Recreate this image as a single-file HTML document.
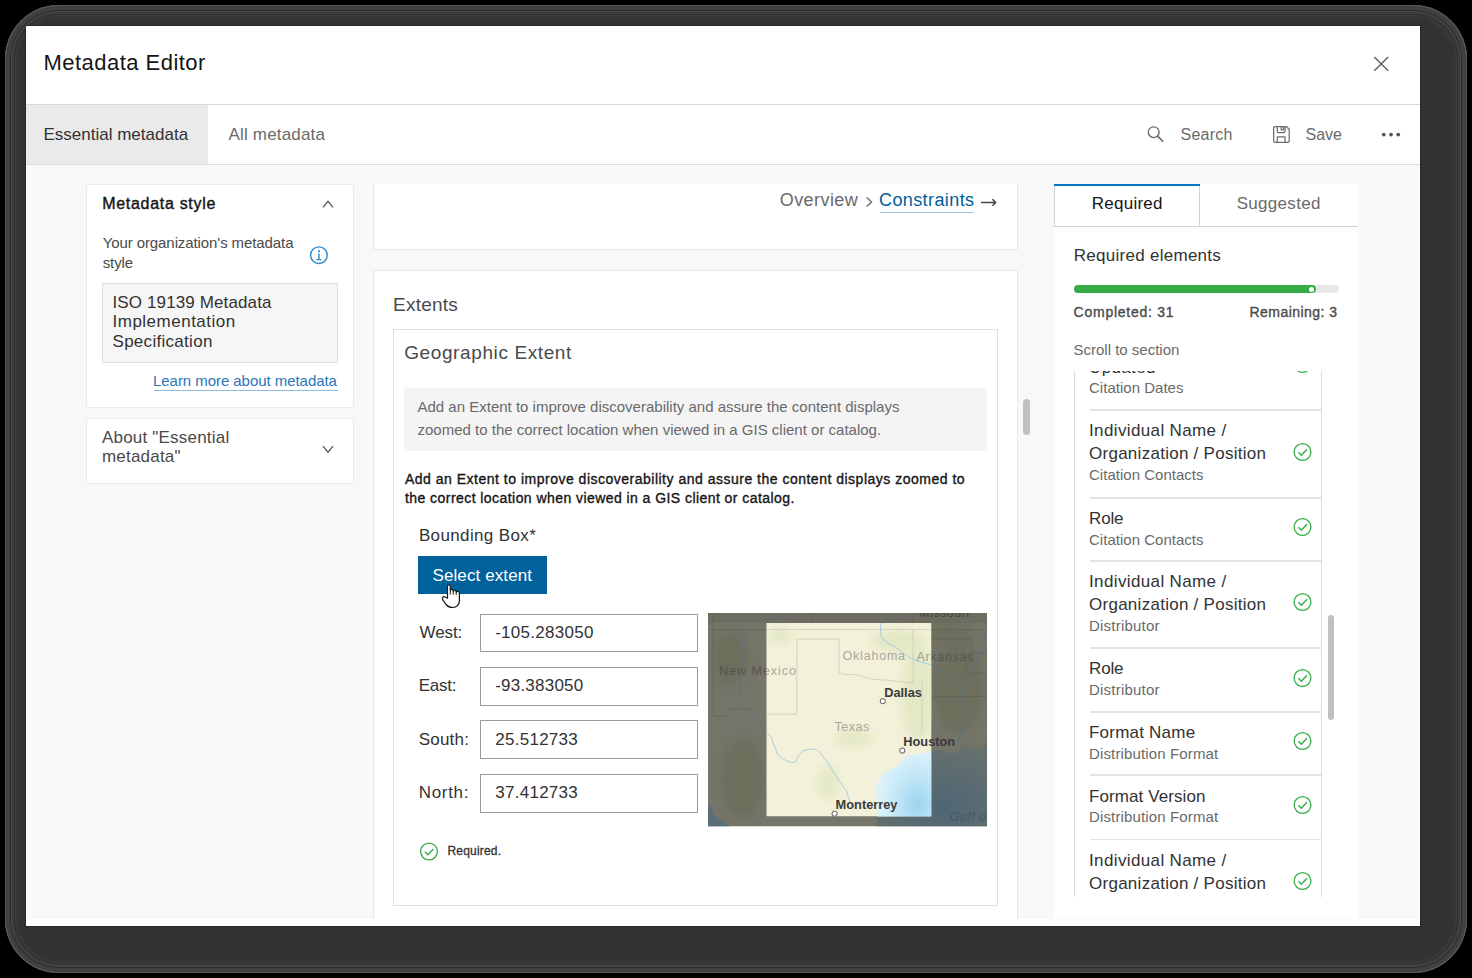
<!DOCTYPE html>
<html><head><meta charset="utf-8"><title>Metadata Editor</title>
<style>
html,body{margin:0;padding:0;}
body{width:1472px;height:978px;background:#000;position:relative;overflow:hidden;font-family:"Liberation Sans",sans-serif;}
.t{position:absolute;white-space:nowrap;}
.r{position:absolute;}
</style></head><body>
<div class="r" style="left:5px;top:5px;width:1462px;height:968px;background:#323232;border-radius:54px;box-shadow:inset 0 0 0 1px #595959, inset 0 0 0 5px #404040, inset 0 0 0 6px #2c2c2c, inset 0 0 0 7px #484848, inset 0 0 0 9px #3c3c3c, inset 0 0 0 10px #2e2e2e, inset 0 0 0 11px #3e3e3e, inset 0 0 0 14px #353535;"></div>
<div class="r" style="left:26px;top:26px;width:1394px;height:900px;background:#fff;box-shadow:0 0 0 1px #282828;"></div>
<div class="t" style="left:43.5px;top:48.98px;font-size:22px;line-height:28px;color:#151515;letter-spacing:0.47px;">Metadata Editor</div>
<svg class="r" style="left:1372px;top:55px" width="18" height="18" viewBox="0 0 18 18"><path d="M2.3 1.9 L16.2 15.8 M16.2 1.9 L2.3 15.8" stroke="#606060" stroke-width="1.45" fill="none"/></svg>
<div class="r" style="left:26px;top:104px;width:1394px;height:1px;background:#d8d8d8;"></div>
<div class="r" style="left:26px;top:105px;width:182.2px;height:59px;background:#eaeaea;"></div>
<div class="t" style="left:43.5px;top:123.91px;font-size:17px;line-height:21px;color:#323232;">Essential metadata</div>
<div class="t" style="left:228.5px;top:123.91px;font-size:17px;line-height:21px;color:#6a6a6a;letter-spacing:0.17px;">All metadata</div>
<svg class="r" style="left:1146px;top:125px" width="20" height="20" viewBox="0 0 20 20"><circle cx="7.7" cy="7.2" r="5.4" stroke="#6a6a6a" stroke-width="1.35" fill="none"/><path d="M11.6 11.2 L17.2 16.6" stroke="#6a6a6a" stroke-width="1.6" fill="none"/></svg>
<div class="t" style="left:1180.5px;top:124.76px;font-size:16px;line-height:20px;color:#6a6a6a;letter-spacing:0.26px;">Search</div>
<svg class="r" style="left:1271px;top:124px" width="21" height="21" viewBox="0 0 21 21"><g stroke="#6e6e6e" stroke-width="1.25" fill="none" stroke-linejoin="round"><path d="M2.7 3.8 Q2.7 2.7 3.8 2.7 H15.6 L18.2 5.3 V17.2 Q18.2 18.3 17.1 18.3 H3.8 Q2.7 18.3 2.7 17.2 Z"/><path d="M6.3 2.7 V7.6 Q6.3 8.6 7.3 8.6 H13 Q14 8.6 14 7.6 V2.7"/><path d="M10.2 2.7 V5.8 H12.5 V2.7"/><path d="M6.3 18.3 V12.9 H14 V18.3"/></g></svg>
<div class="t" style="left:1305.5px;top:124.76px;font-size:16px;line-height:20px;color:#6a6a6a;">Save</div>
<svg class="r" style="left:1380px;top:130px" width="22" height="10" viewBox="0 0 22 10"><circle cx="3.8" cy="4.6" r="1.9" fill="#555"/><circle cx="11" cy="4.6" r="1.9" fill="#555"/><circle cx="18.2" cy="4.6" r="1.9" fill="#555"/></svg>
<div class="r" style="left:26px;top:164px;width:1394px;height:1px;background:#dcdcdc;"></div>
<div class="r" style="left:27px;top:165px;width:1392px;height:754px;background:#f8f8f8;"></div>
<div class="r" style="left:87px;top:185px;width:266px;height:222px;background:#fff;box-shadow:0 0 0 1px #ebebeb;"></div>
<div class="t" style="left:102.2px;top:194.16px;font-size:16px;line-height:20px;color:#151515;letter-spacing:0.7px;-webkit-text-stroke:0.4px #151515;">Metadata style</div>
<svg class="r" style="left:321px;top:198px" width="14" height="12" viewBox="0 0 14 12"><path d="M2 9.3 L7 3.3 L12 9.3" stroke="#555" stroke-width="1.3" fill="none"/></svg>
<div class="t" style="left:102.7px;top:233.05px;font-size:15px;line-height:19.5px;color:#4a4a4a;letter-spacing:-0.09px;">Your organization's metadata<br>style</div>
<svg class="r" style="left:308px;top:244.7px" width="21" height="21" viewBox="0 0 21 21"><circle cx="10.9" cy="10.2" r="8.3" stroke="#2a86cc" stroke-width="1.4" fill="none"/><circle cx="10.9" cy="6.3" r="1.15" fill="#2a86cc"/><path d="M10.9 8.6 V14.4 M8.4 14.6 H13.4" stroke="#2a86cc" stroke-width="1.4" fill="none"/></svg>
<div class="r" style="left:102px;top:283px;width:236px;height:79.5px;background:#f6f6f6;box-shadow:inset 0 0 0 1px #dedede;"></div>
<div class="t" style="left:112.5px;top:292.41px;font-size:17px;line-height:21px;color:#323232;letter-spacing:0.12px;">ISO 19139 Metadata</div>
<div class="t" style="left:112.5px;top:311.41px;font-size:17px;line-height:21px;color:#323232;letter-spacing:0.5px;">Implementation</div>
<div class="t" style="left:112.5px;top:330.51px;font-size:17px;line-height:21px;color:#323232;letter-spacing:0.29px;">Specification</div>
<div class="t" style="left:153px;top:371.20px;font-size:15px;line-height:19px;color:#2b76b8;letter-spacing:-0.05px;">Learn more about metadata</div>
<div class="r" style="left:153.5px;top:389.5px;width:184.5px;height:1.0px;background:#8fbde0;"></div>
<div class="r" style="left:87px;top:419px;width:266px;height:64px;background:#fff;box-shadow:0 0 0 1px #ebebeb;"></div>
<div class="t" style="left:102px;top:428.21px;font-size:17px;line-height:19.2px;color:#4a4a4a;letter-spacing:0.2px;">About "Essential<br>metadata"</div>
<svg class="r" style="left:321px;top:443px" width="14" height="12" viewBox="0 0 14 12"><path d="M2 3.2 L7 9.2 L12 3.2" stroke="#555" stroke-width="1.3" fill="none"/></svg>
<div class="r" style="left:373px;top:184px;width:645px;height:66px;background:#fff;box-shadow:inset 1px 0 0 #e8e8e8, inset -1px 0 0 #e8e8e8, inset 0 -1px 0 #e8e8e8;"></div>
<div class="t" style="left:779.7px;top:189.26px;font-size:18px;line-height:22px;color:#6a6a6a;letter-spacing:0.44px;">Overview</div>
<svg class="r" style="left:864px;top:193px" width="11" height="16" viewBox="0 0 11 16"><path d="M2.6 4.4 L7.6 8.9 L2.6 13.4" stroke="#6a6a6a" stroke-width="1.35" fill="none"/></svg>
<div class="t" style="left:879px;top:189.26px;font-size:18px;line-height:22px;color:#00619b;letter-spacing:0.4px;">Constraints</div>
<div class="r" style="left:879.5px;top:212px;width:94.0px;height:1px;background:#9cc3e0;"></div>
<svg class="r" style="left:979px;top:196px" width="20" height="14" viewBox="0 0 20 14"><path d="M2 6.5 H16.3 M13.4 3.2 L16.7 6.5 L13.4 9.8" stroke="#444" stroke-width="1.5" fill="none"/></svg>
<div class="r" style="left:373px;top:270px;width:645px;height:649px;background:#fff;box-shadow:inset 1px 0 0 #e8e8e8, inset -1px 0 0 #e8e8e8, inset 0 1px 0 #e8e8e8;"></div>
<div class="t" style="left:393.0px;top:292.92px;font-size:19px;line-height:24px;color:#4a4a4a;letter-spacing:0.25px;">Extents</div>
<div class="r" style="left:393px;top:329px;width:604.5px;height:577px;background:#fff;box-shadow:inset 0 0 0 1px #e0e0e0;"></div>
<div class="t" style="left:404.2px;top:341.22px;font-size:19px;line-height:24px;color:#4a4a4a;letter-spacing:0.61px;">Geographic Extent</div>
<div class="r" style="left:404px;top:388px;width:583px;height:63px;background:#f4f4f4;"></div>
<div class="t" style="left:417.5px;top:396.20px;font-size:15px;line-height:22.4px;color:#6a6a6a;">Add an Extent to improve discoverability and assure the content displays<br>zoomed to the correct location when viewed in a GIS client or catalog.</div>
<div class="t" style="left:405px;top:470.15px;font-size:14px;line-height:18px;color:#151515;letter-spacing:0.5px;-webkit-text-stroke:0.35px #151515;">Add an Extent to improve discoverability and assure the content displays zoomed to</div>
<div class="t" style="left:405px;top:489.25px;font-size:14px;line-height:18px;color:#151515;letter-spacing:0.44px;-webkit-text-stroke:0.35px #151515;">the correct location when viewed in a GIS client or catalog.</div>
<div class="t" style="left:418.9px;top:525.21px;font-size:17px;line-height:21px;color:#323232;letter-spacing:0.37px;">Bounding Box*</div>
<div class="r" style="left:418px;top:556px;width:128.5px;height:38px;background:#00619b;"></div>
<div class="t" style="left:432.5px;top:565.01px;font-size:17px;line-height:21px;color:#ffffff;letter-spacing:0.1px;">Select extent</div>
<div class="r" style="left:479.5px;top:613.5px;width:218.5px;height:38.5px;background:#fff;box-shadow:inset 0 0 0 1px #9a9a9a;"></div>
<div class="t" style="left:419.5px;top:621.81px;font-size:17px;line-height:21px;color:#323232;letter-spacing:-0.1px;">West:</div>
<div class="t" style="left:495.2px;top:621.81px;font-size:17px;line-height:21px;color:#323232;letter-spacing:0.27px;">-105.283050</div>
<div class="r" style="left:479.5px;top:667px;width:218.5px;height:38.5px;background:#fff;box-shadow:inset 0 0 0 1px #9a9a9a;"></div>
<div class="t" style="left:418.7px;top:674.61px;font-size:17px;line-height:21px;color:#323232;letter-spacing:-0.25px;">East:</div>
<div class="t" style="left:495.2px;top:674.61px;font-size:17px;line-height:21px;color:#323232;letter-spacing:0.22px;">-93.383050</div>
<div class="r" style="left:479.5px;top:720px;width:218.5px;height:38.5px;background:#fff;box-shadow:inset 0 0 0 1px #9a9a9a;"></div>
<div class="t" style="left:418.7px;top:728.61px;font-size:17px;line-height:21px;color:#323232;letter-spacing:0.22px;">South:</div>
<div class="t" style="left:495.2px;top:728.61px;font-size:17px;line-height:21px;color:#323232;letter-spacing:0.28px;">25.512733</div>
<div class="r" style="left:479.5px;top:774px;width:218.5px;height:38.5px;background:#fff;box-shadow:inset 0 0 0 1px #9a9a9a;"></div>
<div class="t" style="left:418.7px;top:781.81px;font-size:17px;line-height:21px;color:#323232;letter-spacing:0.7px;">North:</div>
<div class="t" style="left:495.2px;top:781.81px;font-size:17px;line-height:21px;color:#323232;letter-spacing:0.28px;">37.412733</div>
<svg class="r" style="left:707.5px;top:613.2px" width="279.5" height="213.5" viewBox="0 0 279.5 213.5">
<defs>
<clipPath id="hl"><rect x="58.3" y="9.9" width="165.2" height="193.6"/></clipPath>
<clipPath id="mp"><rect x="0" y="0" width="279.5" height="213.5"/></clipPath>
<radialGradient id="wg" cx="0.75" cy="0.7" r="0.7"><stop offset="0" stop-color="#9dd5f0"/><stop offset="0.5" stop-color="#bfe5f6"/><stop offset="1" stop-color="#dcf2fb"/></radialGradient>
<radialGradient id="dg" cx="0.6" cy="0.75" r="0.7"><stop offset="0" stop-color="#4f6674"/><stop offset="1" stop-color="#65706e"/></radialGradient>
<filter id="bl" x="-50%" y="-50%" width="200%" height="200%"><feGaussianBlur stdDeviation="6"/></filter>
<filter id="bl2" x="-50%" y="-50%" width="200%" height="200%"><feGaussianBlur stdDeviation="4"/></filter>
</defs>
<g clip-path="url(#mp)">
<rect width="279.5" height="213.5" fill="#76756a"/>
<!-- vegetation blotches -->
<g fill="#636a50" filter="url(#bl)" opacity="0.5">
<ellipse cx="22" cy="45" rx="18" ry="28"/>
<ellipse cx="35" cy="165" rx="22" ry="40"/>
<ellipse cx="250" cy="75" rx="26" ry="45"/>
<ellipse cx="240" cy="20" rx="26" ry="12"/>
<ellipse cx="262" cy="150" rx="14" ry="18"/>
</g>
<rect x="0" y="0" width="279.5" height="10" fill="#5f5e55" opacity="0.35"/>
<!-- outside water -->
<path d="M223.3 138.3 C228 137.5 232 136.5 235.7 137.2 C239 138 242 141 244.7 140.6 C249 139 252 134 256 133.9 C260 134 263 137.5 267 137.2 C271 137 275 132 279.5 131.6 V213.5 H168 C170 205 169 195 170.5 190 C169 184 167.5 180 168.2 176.6 C168.5 172 169 169 170.5 167.5 C173 162 175 160 177.2 158.6 C183 156 188 154 190.7 151.8 C194 147 196 144 199.7 142.8 C205 141.5 210 140.8 213.2 140.6 C217 140 220 139 223.3 138.3 Z" fill="url(#dg)"/>
<path d="M0 191 C3 193 6 196 4 200 C8 204 16 208 22 213.5 H0 Z" fill="#5a6f7a"/>
<!-- state borders outside -->
<g stroke="#5f5f58" stroke-width="0.8" fill="none" opacity="0.8">
<path d="M0 16.5 H279.5"/>
<path d="M103 0 V16.5"/>
<path d="M5.4 0 V103 H20 V96 H46"/>
<path d="M205 0 V26 H264 V40 H279.5"/>
<path d="M214 83.5 H279.5"/>
<path d="M258 40 V60 H279.5"/>
</g>
<!-- rivers outside -->
<g stroke="#5c7282" stroke-width="1" fill="none">
<path d="M27.8 2.4 C35 15 38 22 37.2 27 C34 50 30 70 32.5 86 C36 95 42 100 46.6 104.7 C52 112 58 118 63 123.5"/>
<path d="M223 53 C232 58 240 60 243 64 C247 70 250 72 254 73 C256 80 254 95 256 104.7 C258 112 252 120 250 130"/>
<path d="M279.5 17 C274 25 278 32 272 40 C268 48 264 58 256 70"/>
</g>
<g font-family="Liberation Sans" font-size="12.5" letter-spacing="0.5"><text x="11" y="62.4" fill="#55554d" letter-spacing="1">New Mexico</text><text x="208.4" y="48.2" fill="#56564e" letter-spacing="0.7">Arkansas</text></g>
<!-- highlight box -->
<g clip-path="url(#hl)">
<rect x="58.3" y="9.9" width="165.2" height="193.6" fill="#f3f1d9"/>
<g fill="#dfe6c0" filter="url(#bl2)" opacity="0.8">
<ellipse cx="210" cy="80" rx="16" ry="50"/>
<ellipse cx="190" cy="28" rx="26" ry="12"/>
<ellipse cx="145" cy="125" rx="18" ry="8"/>
<ellipse cx="120" cy="170" rx="10" ry="16"/>
<ellipse cx="72" cy="22" rx="12" ry="8"/>
</g>
<path d="M223.5 138.3 C220 139 217 140 213.2 140.6 C210 140.8 205 141.5 199.7 142.8 C196 144 194 147 190.7 151.8 C188 154 183 156 177.2 158.6 C175 160 173 162 170.5 167.5 C169 169 168.5 172 168.2 176.6 C167.5 180 169 184 170.5 190 C169 195 170 205 168 213.5 H223.5 Z" fill="url(#wg)"/>
<g stroke="#cfcfc4" stroke-width="0.9" fill="none">
<path d="M58 16.5 H224"/>
<path d="M88.9 26 V101.1 H58"/>
<path d="M88.9 26 H131 V60"/>
<path d="M131 60 C140 63 148 60 156 64 C166 68 175 66 186 68 C195 69 200 70 206.5 69.4"/>
<path d="M205 16.5 V69 M214 69 V120"/>
</g>
<g stroke="#a3cde0" stroke-width="1" fill="none">
<path d="M46.6 104.7 C52 112 58 118 63 123.5 C66 132 68 138 70.1 142.3 C76 147 82 150 86.6 149.4 C90 145 92 139 96 137.6 C102 136 107 135 110.1 137.6 C116 144 120 150 124.2 156.5 C129 165 134 172 138.3 177.6 C140 184 142 188 143 191.7"/>
<path d="M171.3 1.2 C173 10 172 18 173.6 24.7 C178 29 183 32 187.7 34.1 C195 40 200 44 204.2 45.9 C212 49 220 51 227.7 53"/>
</g>
<g font-family="Liberation Sans" font-size="12.5" letter-spacing="0.5"><text x="11" y="62.4" fill="#a9a99d" letter-spacing="1">New Mexico</text><text x="208.4" y="48.2" fill="#a0a096" letter-spacing="0.7">Arkansas</text></g>
</g>
<!-- labels -->
<g font-family="Liberation Sans" font-size="12.5">

<text x="134.5" y="46.6" fill="#a9a99f" letter-spacing="0.8">Oklahoma</text>

<text x="126.6" y="118" fill="#a9a99e" letter-spacing="0.5">Texas</text>
<text x="211" y="3.5" fill="#45453d" letter-spacing="0.5">Missouri</text>
</g>
<g font-family="Liberation Sans" font-size="12.8" font-weight="bold" fill="#3a3a3a">
<text x="176.2" y="84.2">Dallas</text>
<text x="195.3" y="133.1">Houston</text>
<text x="127.6" y="195.8">Monterrey</text>
</g>
<text x="241.8" y="207.7" font-family="Liberation Sans" font-size="12.5" font-style="italic" fill="#3f5a6a" letter-spacing="0.6">Gulf o</text>
<g fill="#fff" stroke="#555" stroke-width="1">
<circle cx="174.8" cy="88.2" r="2.6"/>
<circle cx="194.3" cy="137.6" r="2.6"/>
<circle cx="126.6" cy="200.7" r="2.6"/>
</g>
</g>
</svg>

<svg class="r" style="left:418px;top:840px" width="22" height="22" viewBox="0 0 22 22"><circle cx="11" cy="11.5" r="8.4" stroke="#35ac46" stroke-width="1.3" fill="none"/><path d="M6.8 11.8 L9.8 14.8 L15.4 8.9" stroke="#35ac46" stroke-width="1.4" fill="none"/></svg>
<div class="t" style="left:447.5px;top:844.44px;font-size:12px;line-height:15px;color:#323232;letter-spacing:0.18px;-webkit-text-stroke:0.3px #323232;">Required.</div>
<div class="r" style="left:1023px;top:399px;width:7px;height:36px;background:#c1c1c1;border-radius:4px;"></div>
<div class="r" style="left:1054px;top:184px;width:304px;height:734px;background:#fff;"></div>
<div class="r" style="left:1054px;top:184px;width:1px;height:42px;background:#d4d4d4;"></div>
<div class="r" style="left:1199px;top:186px;width:1px;height:40px;background:#d4d4d4;"></div>
<div class="r" style="left:1054px;top:226px;width:304px;height:1px;background:#d4d4d4;"></div>
<div class="r" style="left:1054px;top:184px;width:145.5px;height:2px;background:#0079c1;"></div>
<div class="t" style="left:1091.8px;top:193.41px;font-size:17px;line-height:21px;color:#151515;letter-spacing:0.24px;">Required</div>
<div class="t" style="left:1236.7px;top:193.41px;font-size:17px;line-height:21px;color:#6a6a6a;letter-spacing:0.3px;">Suggested</div>
<div class="t" style="left:1073.7px;top:244.91px;font-size:17px;line-height:21px;color:#323232;letter-spacing:0.28px;">Required elements</div>
<div class="r" style="left:1073.5px;top:285px;width:265.0px;height:8px;background:#e8e8e8;border-radius:4px;"></div>
<div class="r" style="left:1073.5px;top:285px;width:242.0px;height:8px;background:#35ac46;border-radius:4px;"></div>
<div class="r" style="left:1308.5px;top:286.5px;width:5px;height:5px;border-radius:50%;background:#fff"></div>
<div class="t" style="left:1073.6px;top:302.65px;font-size:14px;line-height:18px;color:#4a4a4a;letter-spacing:0.75px;-webkit-text-stroke:0.35px #4a4a4a;">Completed: 31</div>
<div class="t" style="left:1249.5px;top:302.65px;font-size:14px;line-height:18px;color:#4a4a4a;letter-spacing:0.45px;-webkit-text-stroke:0.35px #4a4a4a;">Remaining: 3</div>
<div class="t" style="left:1073.5px;top:340.20px;font-size:15px;line-height:19px;color:#6a6a6a;">Scroll to section</div>
<div class="r" style="left:1074px;top:371px;width:248px;height:526px;overflow:hidden;border-left:1px solid #dcdcdc;border-right:1px solid #dcdcdc;box-sizing:border-box">
<div class="t" style="left:14px;top:-37.39px;font-size:17px;line-height:21px;color:#323232;letter-spacing:0.37px;">Date Type /</div>
<div class="t" style="left:14px;top:-14.39px;font-size:17px;line-height:21px;color:#323232;letter-spacing:0.37px;">Updated</div>
<div class="t" style="left:14px;top:7.30px;font-size:15px;line-height:19px;color:#6a6a6a;letter-spacing:0.020000000000000004px;">Citation Dates</div>
<svg class="r" style="left:218px;top:-16.6px" width="20" height="20" viewBox="0 0 20 20"><circle cx="9.5" cy="10" r="8.4" stroke="#35ac46" stroke-width="1.3" fill="none"/><path d="M5.4 10.2 L8.4 13.2 L13.9 7.3" stroke="#35ac46" stroke-width="1.4" fill="none"/></svg>
<div class="r" style="left:15px;top:38.30000000000001px;width:232px;height:1.5px;background:#e4e4e4;"></div>
<div class="t" style="left:14px;top:49.41px;font-size:17px;line-height:21px;color:#323232;letter-spacing:0.37px;">Individual Name /</div>
<div class="t" style="left:14px;top:72.41px;font-size:17px;line-height:21px;color:#323232;letter-spacing:0.27px;">Organization / Position</div>
<div class="t" style="left:14px;top:94.10px;font-size:15px;line-height:19px;color:#6a6a6a;letter-spacing:0.020000000000000004px;">Citation Contacts</div>
<svg class="r" style="left:218px;top:70.6px" width="20" height="20" viewBox="0 0 20 20"><circle cx="9.5" cy="10" r="8.4" stroke="#35ac46" stroke-width="1.3" fill="none"/><path d="M5.4 10.2 L8.4 13.2 L13.9 7.3" stroke="#35ac46" stroke-width="1.4" fill="none"/></svg>
<div class="r" style="left:15px;top:126.0px;width:232px;height:1.5px;background:#e4e4e4;"></div>
<div class="t" style="left:14px;top:137.11px;font-size:17px;line-height:21px;color:#323232;letter-spacing:-0.13px;">Role</div>
<div class="t" style="left:14px;top:158.80px;font-size:15px;line-height:19px;color:#6a6a6a;letter-spacing:0.020000000000000004px;">Citation Contacts</div>
<svg class="r" style="left:218px;top:146.0px" width="20" height="20" viewBox="0 0 20 20"><circle cx="9.5" cy="10" r="8.4" stroke="#35ac46" stroke-width="1.3" fill="none"/><path d="M5.4 10.2 L8.4 13.2 L13.9 7.3" stroke="#35ac46" stroke-width="1.4" fill="none"/></svg>
<div class="r" style="left:15px;top:189.0px;width:232px;height:1.5px;background:#e4e4e4;"></div>
<div class="t" style="left:14px;top:200.11px;font-size:17px;line-height:21px;color:#323232;letter-spacing:0.37px;">Individual Name /</div>
<div class="t" style="left:14px;top:223.11px;font-size:17px;line-height:21px;color:#323232;letter-spacing:0.27px;">Organization / Position</div>
<div class="t" style="left:14px;top:244.80px;font-size:15px;line-height:19px;color:#6a6a6a;letter-spacing:0.22px;">Distributor</div>
<svg class="r" style="left:218px;top:221.0px" width="20" height="20" viewBox="0 0 20 20"><circle cx="9.5" cy="10" r="8.4" stroke="#35ac46" stroke-width="1.3" fill="none"/><path d="M5.4 10.2 L8.4 13.2 L13.9 7.3" stroke="#35ac46" stroke-width="1.4" fill="none"/></svg>
<div class="r" style="left:15px;top:276.0px;width:232px;height:1.5px;background:#e4e4e4;"></div>
<div class="t" style="left:14px;top:287.11px;font-size:17px;line-height:21px;color:#323232;letter-spacing:-0.13px;">Role</div>
<div class="t" style="left:14px;top:308.80px;font-size:15px;line-height:19px;color:#6a6a6a;letter-spacing:0.22px;">Distributor</div>
<svg class="r" style="left:218px;top:296.5px" width="20" height="20" viewBox="0 0 20 20"><circle cx="9.5" cy="10" r="8.4" stroke="#35ac46" stroke-width="1.3" fill="none"/><path d="M5.4 10.2 L8.4 13.2 L13.9 7.3" stroke="#35ac46" stroke-width="1.4" fill="none"/></svg>
<div class="r" style="left:15px;top:340.0px;width:232px;height:1.5px;background:#e4e4e4;"></div>
<div class="t" style="left:14px;top:351.11px;font-size:17px;line-height:21px;color:#323232;letter-spacing:0.22px;">Format Name</div>
<div class="t" style="left:14px;top:372.80px;font-size:15px;line-height:19px;color:#6a6a6a;letter-spacing:0.14px;">Distribution Format</div>
<svg class="r" style="left:218px;top:360.2px" width="20" height="20" viewBox="0 0 20 20"><circle cx="9.5" cy="10" r="8.4" stroke="#35ac46" stroke-width="1.3" fill="none"/><path d="M5.4 10.2 L8.4 13.2 L13.9 7.3" stroke="#35ac46" stroke-width="1.4" fill="none"/></svg>
<div class="r" style="left:15px;top:403.4px;width:232px;height:1.5px;background:#e4e4e4;"></div>
<div class="t" style="left:14px;top:414.51px;font-size:17px;line-height:21px;color:#323232;letter-spacing:0.09000000000000001px;">Format Version</div>
<div class="t" style="left:14px;top:436.20px;font-size:15px;line-height:19px;color:#6a6a6a;letter-spacing:0.14px;">Distribution Format</div>
<svg class="r" style="left:218px;top:424.1px" width="20" height="20" viewBox="0 0 20 20"><circle cx="9.5" cy="10" r="8.4" stroke="#35ac46" stroke-width="1.3" fill="none"/><path d="M5.4 10.2 L8.4 13.2 L13.9 7.3" stroke="#35ac46" stroke-width="1.4" fill="none"/></svg>
<div class="r" style="left:15px;top:467.9px;width:232px;height:1.5px;background:#e4e4e4;"></div>
<div class="t" style="left:14px;top:479.01px;font-size:17px;line-height:21px;color:#323232;letter-spacing:0.37px;">Individual Name /</div>
<div class="t" style="left:14px;top:502.01px;font-size:17px;line-height:21px;color:#323232;letter-spacing:0.27px;">Organization / Position</div>
<div class="t" style="left:14px;top:523.70px;font-size:15px;line-height:19px;color:#6a6a6a;letter-spacing:0.22px;">Distributor</div>
<svg class="r" style="left:218px;top:500.2px" width="20" height="20" viewBox="0 0 20 20"><circle cx="9.5" cy="10" r="8.4" stroke="#35ac46" stroke-width="1.3" fill="none"/><path d="M5.4 10.2 L8.4 13.2 L13.9 7.3" stroke="#35ac46" stroke-width="1.4" fill="none"/></svg>
</div>
<div class="r" style="left:1327.5px;top:614.5px;width:6.5px;height:105.0px;background:#c1c1c1;border-radius:4px;"></div>
<svg class="r" style="left:436px;top:578px" width="32" height="32" viewBox="0 0 32 32"><path d="M11.5 20.2 V8.2 C11.5 6.3 14.3 6.3 14.3 8.2 V12.6 C14.4 11 17.2 11 17.2 12.8 V13.6 C17.4 12.1 20.2 12.1 20.2 14 V14.5 C20.4 13 23.4 13 23.4 15 V22.5 C23.4 26.8 20.5 29.5 16.8 29.5 C13.5 29.5 11.5 28.2 10 26.5 L6.8 21.8 C5.8 20.3 6.8 18.2 8.6 18.8 Z" fill="#fff" stroke="#161616" stroke-width="1.2" stroke-linejoin="round"/><path d="M14.3 12.6 V16.6 M17.2 13.6 V16.8 M20.2 14.5 V17" stroke="#161616" stroke-width="1"/></svg>
</body></html>
